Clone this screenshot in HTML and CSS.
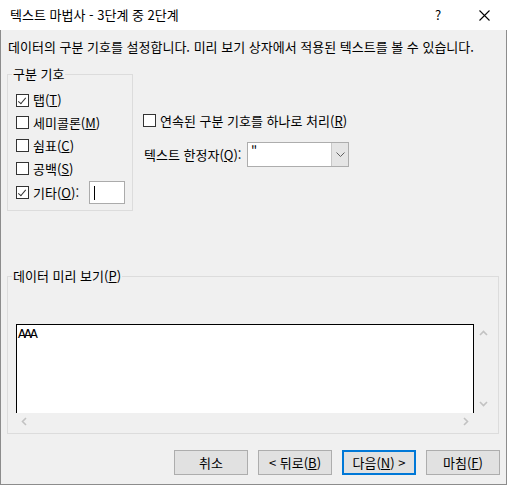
FILE: index.html
```html
<!DOCTYPE html>
<html lang="ko">
<head>
<meta charset="utf-8">
<title>텍스트 마법사</title>
<link rel="stylesheet" href="styles.css">
</head>
<body>
<div class="window">
  <div class="titlebar">
    <span class="title">텍스트 마법사 - 3단계 중 2단계</span>
    <span class="help">?</span>
    <span class="close"><svg width="11" height="11" viewBox="0 0 11 11"><path d="M0.5 0.5 L10.5 10.5 M10.5 0.5 L0.5 10.5" stroke="#000" stroke-width="1.1" fill="none"/></svg></span>
  </div>
  <div class="client">
    <p class="intro">데이터의 구분 기호를 설정합니다. 미리 보기 상자에서 적용된 텍스트를 볼 수 있습니다.</p>
    <div class="top-row">
      <fieldset class="group delims">
        <legend>구분 기호</legend>
        <div class="check first"><span class="box checked"></span><span>탭(<u>T</u>)</span></div>
        <div class="check"><span class="box"></span><span>세미콜론(<u>M</u>)</span></div>
        <div class="check"><span class="box"></span><span>쉼표(<u>C</u>)</span></div>
        <div class="check"><span class="box"></span><span>공백(<u>S</u>)</span></div>
        <div class="check other"><span class="box checked"></span><span>기타(<u>O</u>):</span><span class="textbox"><span class="caret"></span></span></div>
      </fieldset>
      <div class="options">
        <div class="check"><span class="box"></span><span>연속된 구분 기호를 하나로 처리(<u>R</u>)</span></div>
        <div class="qualifier">
          <span class="qlabel">텍스트 한정자(<u>Q</u>):</span>
          <div class="combo">
            <span class="value">"</span>
            <span class="dd"><svg width="9" height="6" viewBox="0 0 9 6"><path d="M0.5 0.5 L4.5 4.5 L8.5 0.5" stroke="#606060" stroke-width="1" fill="none"/></svg></span>
          </div>
        </div>
      </div>
    </div>
    <fieldset class="group preview">
      <legend>데이터 미리 보기(<u>P</u>)</legend>
      <div class="preview-main">
        <div class="sheet">AAA</div>
        <div class="vscroll">
          <svg width="9" height="6" viewBox="0 0 9 6"><path d="M1 5 L4.5 1.5 L8 5" stroke="#c2c2c2" stroke-width="1.6" fill="none"/></svg>
          <svg width="9" height="6" viewBox="0 0 9 6"><path d="M1 1 L4.5 4.5 L8 1" stroke="#c2c2c2" stroke-width="1.6" fill="none"/></svg>
        </div>
      </div>
      <div class="hscroll">
        <svg width="6" height="9" viewBox="0 0 6 9"><path d="M5 1 L1.5 4.5 L5 8" stroke="#c2c2c2" stroke-width="1.6" fill="none"/></svg>
        <svg width="6" height="9" viewBox="0 0 6 9"><path d="M1 1 L4.5 4.5 L1 8" stroke="#c2c2c2" stroke-width="1.6" fill="none"/></svg>
      </div>
    </fieldset>
    <div class="buttons">
      <button class="btn">취소</button>
      <button class="btn">&lt; 뒤로(<u>B</u>)</button>
      <button class="btn default">다음(<u>N</u>) &gt;</button>
      <button class="btn">마침(<u>F</u>)</button>
    </div>
  </div>
</div>
</body>
</html>
```

FILE: styles.css
```css
* { box-sizing: border-box; }
html, body { margin: 0; padding: 0; }
body {
  width: 507px;
  height: 485px;
  overflow: hidden;
  background: #fff;
  color: #000;
  font-family: "Noto Sans CJK KR", "Noto Sans", sans-serif;
  font-size: 13px;
  line-height: 16px;
}
u { text-decoration: underline; text-underline-offset: 1px; }

.window {
  width: 507px;
  height: 485px;
  display: flex;
  flex-direction: column;
}

.titlebar {
  flex: none;
  height: 30px;
  background: #fff;
  display: flex;
  align-items: center;
  padding-left: 10px;
}
.title { flex: 1; }
.help { width: 46px; text-align: center; }
.close { width: 46px; height: 30px; display: flex; align-items: center; justify-content: center; }

.client {
  flex: 1;
  background: #f0f0f0;
  border: 1px solid #8c8c8c;
  border-top: none;
  padding: 0 6px;
  display: flex;
  flex-direction: column;
}

.intro { margin: 9px 0 0 1px; }

.top-row {
  display: flex;
  align-items: flex-start;
  margin-top: 11px;
}

.group {
  margin: 0;
  border: 1px solid #dcdcdc;
  min-width: 0;
}
.group legend {
  padding: 0 1px;
  margin-left: -4px;
}

.delims {
  width: 126px;
  padding: 7px 4px 5px 8px;
}

.check {
  display: flex;
  align-items: center;
  height: 23px;
  white-space: nowrap;
}
.check.first { height: 22px; }
.box {
  flex: none;
  width: 13px;
  height: 13px;
  margin-right: 4px;
  background: #fff;
  border: 1px solid #333;
  position: relative;
}
.box.checked::after {
  content: "";
  position: absolute;
  left: 3px;
  top: 1px;
  width: 3px;
  height: 7px;
  border-right: 1px solid #333;
  border-bottom: 1px solid #333;
  transform: rotate(40deg);
}

.check.other { height: 25px; }
.textbox {
  margin-left: 10px;
  width: 36px;
  height: 23px;
  background: #fff;
  border: 1px solid #ababab;
  display: flex;
  align-items: center;
  padding-left: 4px;
}
.caret { width: 1px; height: 14px; background: #000; }

.options {
  margin-left: 10px;
  margin-top: 43px;
  display: flex;
  flex-direction: column;
}
.qualifier {
  display: flex;
  align-items: center;
  margin-top: 10px;
  height: 25px;
}
.qlabel { width: 104px; padding-left: 1px; }
.combo {
  width: 102px;
  height: 25px;
  background: #fff;
  border: 1px solid #adadad;
  display: flex;
}
.combo .value { flex: 1; padding-left: 3px; line-height: 18px; color: #000; }
.combo .dd {
  width: 17px;
  background: #e5e5e5;
  border-left: 1px solid #c8c8c8;
  display: flex;
  align-items: center;
  justify-content: center;
}

.preview {
  margin-top: 57px;
  width: 492px;
  padding: 40px 0 3px 8px;
}
.preview-main { display: flex; }
.sheet {
  width: 458px;
  height: 89px;
  background: #fff;
  border: 1px solid #000;
  border-bottom: none;
  font-family: "Liberation Mono", monospace;
  font-size: 13px;
  letter-spacing: -1.8px;
  line-height: 13px;
  padding: 3px 0 0 1px;
}
.vscroll {
  width: 17px;
  margin-left: 1px;
  display: flex;
  flex-direction: column;
  justify-content: space-between;
  align-items: center;
  padding: 6px 0 6px;
}
.hscroll {
  width: 458px;
  height: 17px;
  display: flex;
  justify-content: space-between;
  align-items: center;
  padding: 0 5px 0 5px;
}

.buttons {
  display: flex;
  justify-content: flex-end;
  gap: 10px;
  margin-top: 16px;
}
.btn {
  width: 74px;
  height: 25px;
  margin: 0;
  padding: 0;
  background: #e1e1e1;
  border: 1px solid #adadad;
  font-family: inherit;
  font-size: 13px;
  line-height: 16px;
  color: #000;
}
.btn.default { border: 2px solid #0078d7; }
```
